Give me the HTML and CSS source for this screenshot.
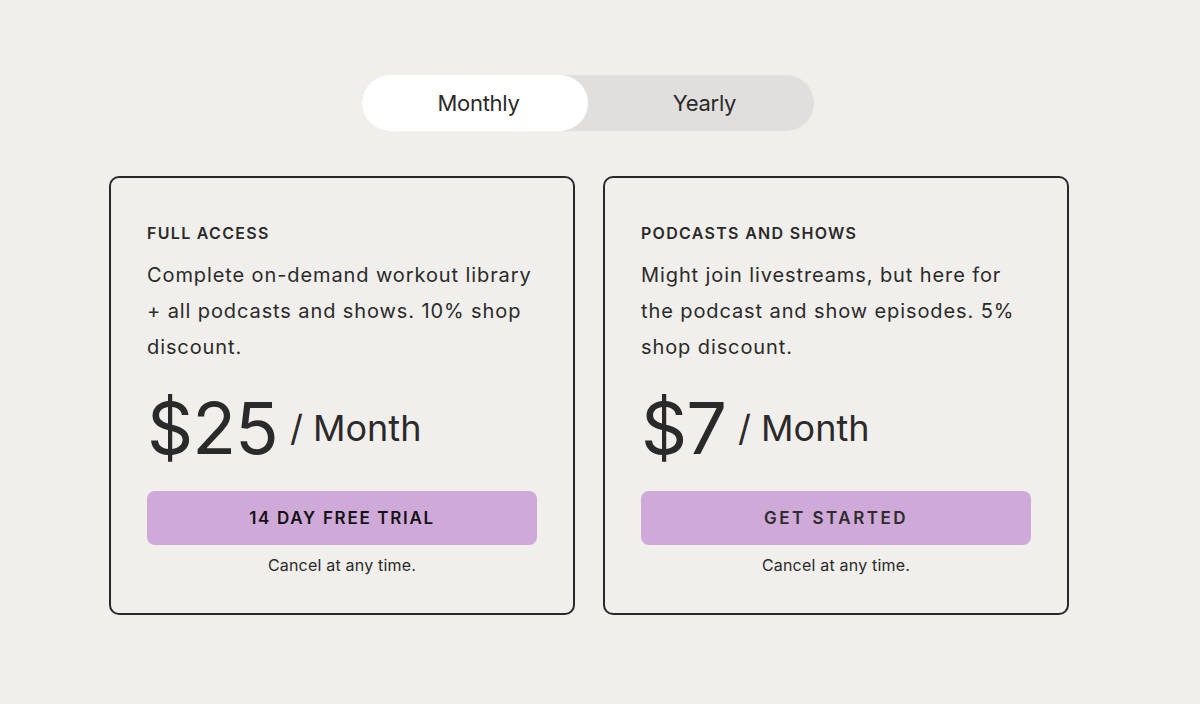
FILE: index.html
```html
<!DOCTYPE html>
<html lang="en">
<head>
<meta charset="utf-8">
<title>Pricing</title>
<link rel="stylesheet" href="styles.css">
</head>
<body>
<main class="page">
  <div class="toggle">
    <button class="toggle-opt is-active">Monthly</button>
    <button class="toggle-opt">Yearly</button>
  </div>
  <div class="plans">
    <section class="plan">
      <h2 class="plan-title">FULL ACCESS</h2>
      <p class="plan-desc">Complete on-demand workout library + all podcasts and shows. 10% shop discount.</p>
      <div class="plan-price"><span class="amount">$25</span><span class="period">/ Month</span></div>
      <button class="plan-cta plan-cta--trial">14 DAY FREE TRIAL</button>
      <p class="plan-note">Cancel at any time.</p>
    </section>
    <section class="plan">
      <h2 class="plan-title">PODCASTS AND SHOWS</h2>
      <p class="plan-desc">Might join livestreams, but here for the podcast and show episodes. 5% shop discount.</p>
      <div class="plan-price"><span class="amount">$7</span><span class="period">/ Month</span></div>
      <button class="plan-cta plan-cta--start">GET STARTED</button>
      <p class="plan-note">Cancel at any time.</p>
    </section>
  </div>
</main>
</body>
</html>
```
FILE: styles.css
```css
* { box-sizing: border-box; }
html, body { margin: 0; padding: 0; }
body {
  background: #f0efeb;
  font-family: Inter, "Noto Sans", sans-serif;
  color: #2b2a2a;
}
.page {
  width: 1176px;
  display: flex;
  flex-direction: column;
  align-items: center;
  padding-top: 75px;
}
.toggle {
  display: flex;
  width: 452px;
  height: 56px;
  background: #e0dfdd;
  border-radius: 28px;
}
.toggle-opt {
  flex: 1;
  border: 0;
  background: transparent;
  border-radius: 28px;
  font-family: inherit;
  font-size: 22px;
  letter-spacing: -0.3px;
  color: #2b2a2a;
  padding: 0 0 0 7px;
  cursor: pointer;
}
.toggle-opt.is-active { background: #ffffff; }
.plans {
  display: flex;
  gap: 28px;
  margin-top: 45px;
  margin-left: 2px;
}
.plan {
  width: 466px;
  border: 2px solid #2a2828;
  border-radius: 10px;
  padding: 43px 36px 36px;
  display: flex;
  flex-direction: column;
}
.plan-title {
  margin: 0;
  font-size: 16px;
  line-height: 24px;
  font-weight: 600;
  letter-spacing: 1.3px;
}
.plan-desc {
  margin: 12px 0 0;
  font-size: 20px;
  line-height: 36px;
  letter-spacing: 0.9px;
  min-height: 108px;
}
.plan-price {
  margin-top: 27px;
  display: flex;
  align-items: center;
  gap: 12px;
  line-height: 72px;
  height: 72px;
}
.amount { font-size: 72px; letter-spacing: -1px; }
.period { font-size: 36px; }
.plan-cta {
  margin-top: 27px;
  height: 54px;
  border: 0;
  border-radius: 8px;
  background: #cfaad8;
  font-family: inherit;
  font-size: 17px;
  font-weight: 600;
  cursor: pointer;
}
.plan-cta--trial {
  letter-spacing: 1.7px;
  color: #141214;
}
.plan-cta--start {
  letter-spacing: 2.5px;
  color: #2e2c2e;
}
.plan-note {
  margin: 8px 0 0;
  text-align: center;
  font-size: 16px;
  line-height: 24px;
  letter-spacing: 0.2px;
}
```
